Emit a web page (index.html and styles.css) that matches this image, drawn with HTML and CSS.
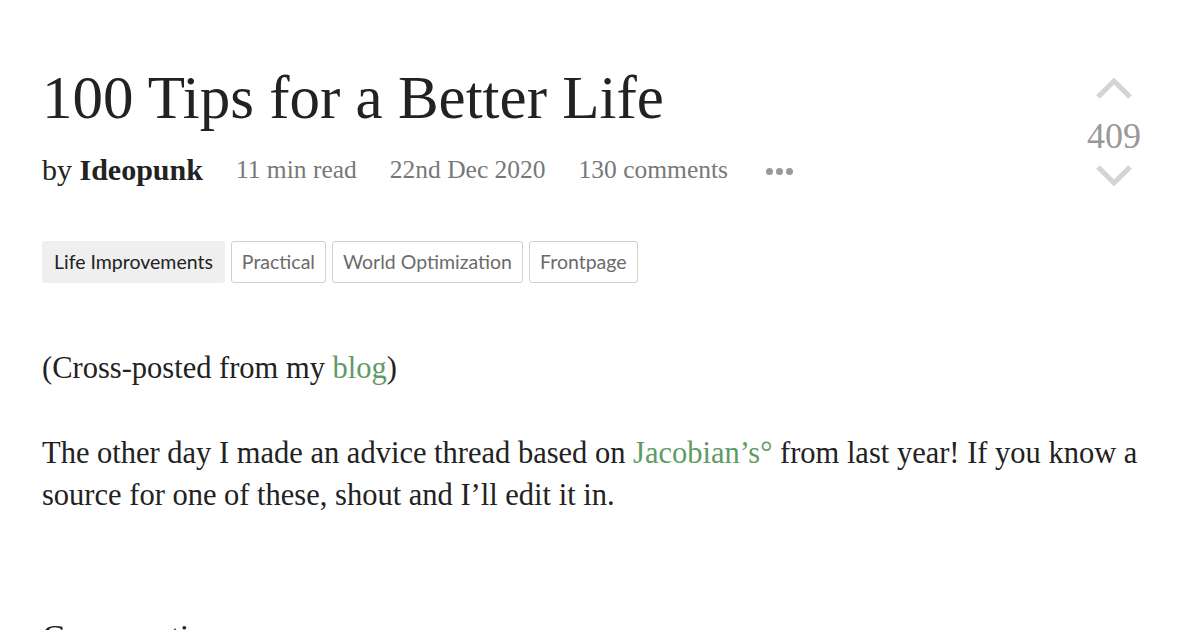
FILE: index.html
```html
<!DOCTYPE html>
<html>
<head>
<meta charset="utf-8">
<link rel="stylesheet" href="styles.css">
</head>
<body>
<main class="post">
  <header class="post-header">
    <div class="header-main">
      <h1 class="title">100 Tips for a Better Life</h1>
      <div class="meta">
        <span class="author">by <b>Ideopunk</b></span>
        <span class="meta-item">11 min read</span>
        <span class="meta-item">22nd Dec 2020</span>
        <span class="meta-item">130 comments</span>
        <span class="dots"><i></i><i></i><i></i></span>
      </div>
    </div>
    <div class="vote">
      <svg class="chev" width="38" height="24" viewBox="0 0 38 24"><path d="M3 21 L19 5 L35 21" fill="none" stroke="#d4d4d4" stroke-width="5"/></svg>
      <div class="score">409</div>
      <svg class="chev" width="38" height="24" viewBox="0 0 38 24"><path d="M3 3 L19 19 L35 3" fill="none" stroke="#d4d4d4" stroke-width="5"/></svg>
    </div>
  </header>
  <div class="tags">
    <span class="tag tag-core">Life Improvements</span>
    <span class="tag">Practical</span>
    <span class="tag">World Optimization</span>
    <span class="tag">Frontpage</span>
  </div>
  <div class="body">
    <p>(Cross-posted from my <a href="#">blog</a>)</p>
    <p>The other day I made an advice thread based on <a href="#">Jacobian’s°</a> from last year! If you know a source for one of these, shout and I’ll edit it in.</p>
    <h2 class="section">Conversations</h2>
  </div>
</main>
</body>
</html>
```
FILE: styles.css
```css
html, body {
  margin: 0;
  padding: 0;
  background: #fff;
}
body {
  font-family: "Liberation Serif", "Times New Roman", serif;
  color: #222;
  overflow: hidden;
  height: 630px;
}
.post {
  padding: 62px 0 0 42px;
  width: 1100px;
}
.post-header {
  display: flex;
  justify-content: space-between;
  align-items: flex-start;
}
.title {
  margin: 0;
  font-size: 61px;
  font-weight: 400;
  line-height: 72px;
  color: #222;
}
.meta {
  display: flex;
  align-items: center;
  margin-top: 21px;
  font-size: 25.5px;
  line-height: 30px;
  color: #787878;
}
.author {
  color: #222;
  font-size: 30px;
  margin-right: 33px;
}
.author b {
  font-weight: 700;
}
.meta-item {
  margin-right: 33px;
}
.dots {
  display: flex;
  gap: 3px;
  margin-left: 5px;
  margin-top: 2px;
}
.dots i {
  width: 7px;
  height: 7px;
  border-radius: 50%;
  background: #999;
}
.vote {
  display: flex;
  flex-direction: column;
  align-items: center;
  width: 56px;
  margin-top: 14px;
}
.score {
  font-size: 36px;
  line-height: 40px;
  color: #999;
  margin: 16px 0 8px;
}
.tags {
  display: flex;
  gap: 6px;
  margin-top: 53px;
}
.tag {
  font-family: "Lato", "Open Sans", sans-serif;
  font-size: 19.5px;
  line-height: 40px;
  padding: 0 10px;
  border: 1px solid #d0d0d0;
  border-radius: 3px;
  color: #6b6b6b;
  background: #fff;
}
.tag-core {
  background: #efefef;
  border-color: #efefef;
  color: #222;
  padding: 0 11px;
}
.body {
  margin-top: 64px;
  width: 1120px;
  font-size: 30.5px;
  line-height: 42px;
  color: #222;
}
.body p {
  margin: 0 0 43px;
}
.body a {
  color: #5f9b65;
  text-decoration: none;
}
.section {
  margin: 101px 0 0;
  font-size: 34px;
  font-weight: 400;
  line-height: 40px;
}
```
